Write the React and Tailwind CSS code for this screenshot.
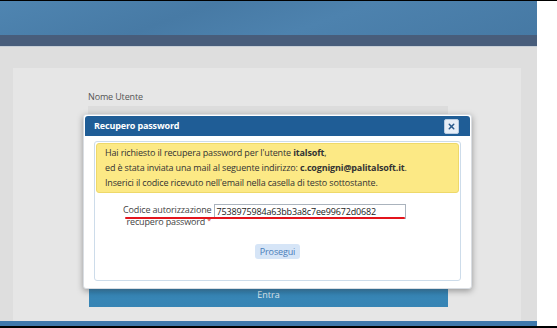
import { X } from 'lucide-react';

const FONT = { fontFamily: '"Open Sans", "Noto Sans", sans-serif' };

function Header() {
  return (
    <div className="flex flex-col">
      <div className="h-[34px] bg-[#4b7fab] bg-[linear-gradient(160deg,#4f85b1_0%,#477aa5_35%,#4d82ae_60%,#4679a4_100%)]" />
      <div className="h-[11px] bg-[#485d7b]" />
      <div className="h-px bg-[#c7ced6]" />
    </div>
  );
}

function LoginForm() {
  return (
    <div className="ml-[13px] mt-[21px] flex w-[508px] flex-1 flex-col bg-[#e6e6e6] pl-[75px] pt-[23px]">
      <span className="text-[9px] leading-[12px] tracking-[-0.15px] text-[#555]">Nome Utente</span>
      <div className="mt-[3px] h-[16px] w-[360px] bg-[#dcdcdc]" />
      <div className="flex-1" />
      <div className="mb-[14px] ml-[1px] flex h-[24px] w-[359px] items-center justify-center bg-[linear-gradient(#5d9cc7,#3786b6_40%,#3784b4)] text-[9px] text-[#dfe9f1]">
        Entra
      </div>
    </div>
  );
}

function RecoveryDialog() {
  return (
    <div className="absolute left-[83px] top-[114px] flex h-[175px] w-[389px] flex-col rounded-[3px] border border-[#d9dde2] bg-white p-px text-[9px] tracking-[-0.15px] shadow-[0_2px_6px_rgba(0,0,0,0.35)]">
      <div className="flex h-[20px] items-center justify-between rounded-t-[3px] bg-[#1f5d96] pl-[9px] pr-[11px]">
        <span className="font-bold text-white">Recupero password</span>
        <span className="flex h-[15px] w-[15px] items-center justify-center rounded-[2px] border border-[#b9cbe0] bg-[#e7eef7]">
          <X className="h-[9px] w-[9px] text-[#2b5a8c]" strokeWidth={4} />
        </span>
      </div>
      <div className="mx-[9px] mb-[6px] mt-[5px] flex flex-1 flex-col rounded-[3px] border border-[#cddcea] p-px">
        <div className="rounded-[3px] border border-[#eed96a] bg-[#fce985] px-[8px] pb-[2px] pt-[1px] leading-[15px] text-[#333]">
          <div>
            Hai richiesto il recupera password per l'utente <b>italsoft</b>,
          </div>
          <div>
            ed è stata inviata una mail al seguente indirizzo: <b>c.cognigni@palitalsoft.it</b>.
          </div>
          <div>Inserici il codice ricevuto nell'email nella casella di testo sottostante.</div>
        </div>
        <div className="relative ml-[27px] mt-[11px] flex items-start">
          <div className="relative z-10 flex flex-col items-center leading-[12px] text-[#444]">
            <span>Codice autorizzazione</span>
            <span className="pl-[3px]">
              recupero password
              <span className="relative -top-[2px] ml-[2px] text-[7px] text-[#c33]">*</span>
            </span>
          </div>
          <div className="ml-[3px] h-[15px] w-[192px] border border-[#aab3bd] bg-white pl-[1px] leading-[13px] text-[#222]">
            7538975984a63bb3a8c7ee99672d0682
          </div>
          <div className="absolute left-[2px] top-[13px] z-20 h-[2px] w-[280px] rounded-full bg-[#e3141c]" />
        </div>
        <div className="mt-[15px] flex justify-center">
          <span className="rounded-[3px] bg-[#d6e5f7] px-[5px] leading-[15px] text-[#4a7db9]">Prosegui</span>
        </div>
      </div>
    </div>
  );
}

export default function App() {
  return (
    <div className="relative flex h-[328px] w-[557px] flex-col overflow-hidden bg-white" style={FONT}>
      <div className="h-px w-full bg-black" />
      <div className="flex w-[537px] flex-1 flex-col">
        <Header />
        <div className="flex flex-1 flex-col bg-[#dedede]">
          <LoginForm />
        </div>
        <div className="h-[5px] bg-[#3f78ab]" />
      </div>
      <div className="h-[2px] w-full bg-black" />
      <RecoveryDialog />
    </div>
  );
}
